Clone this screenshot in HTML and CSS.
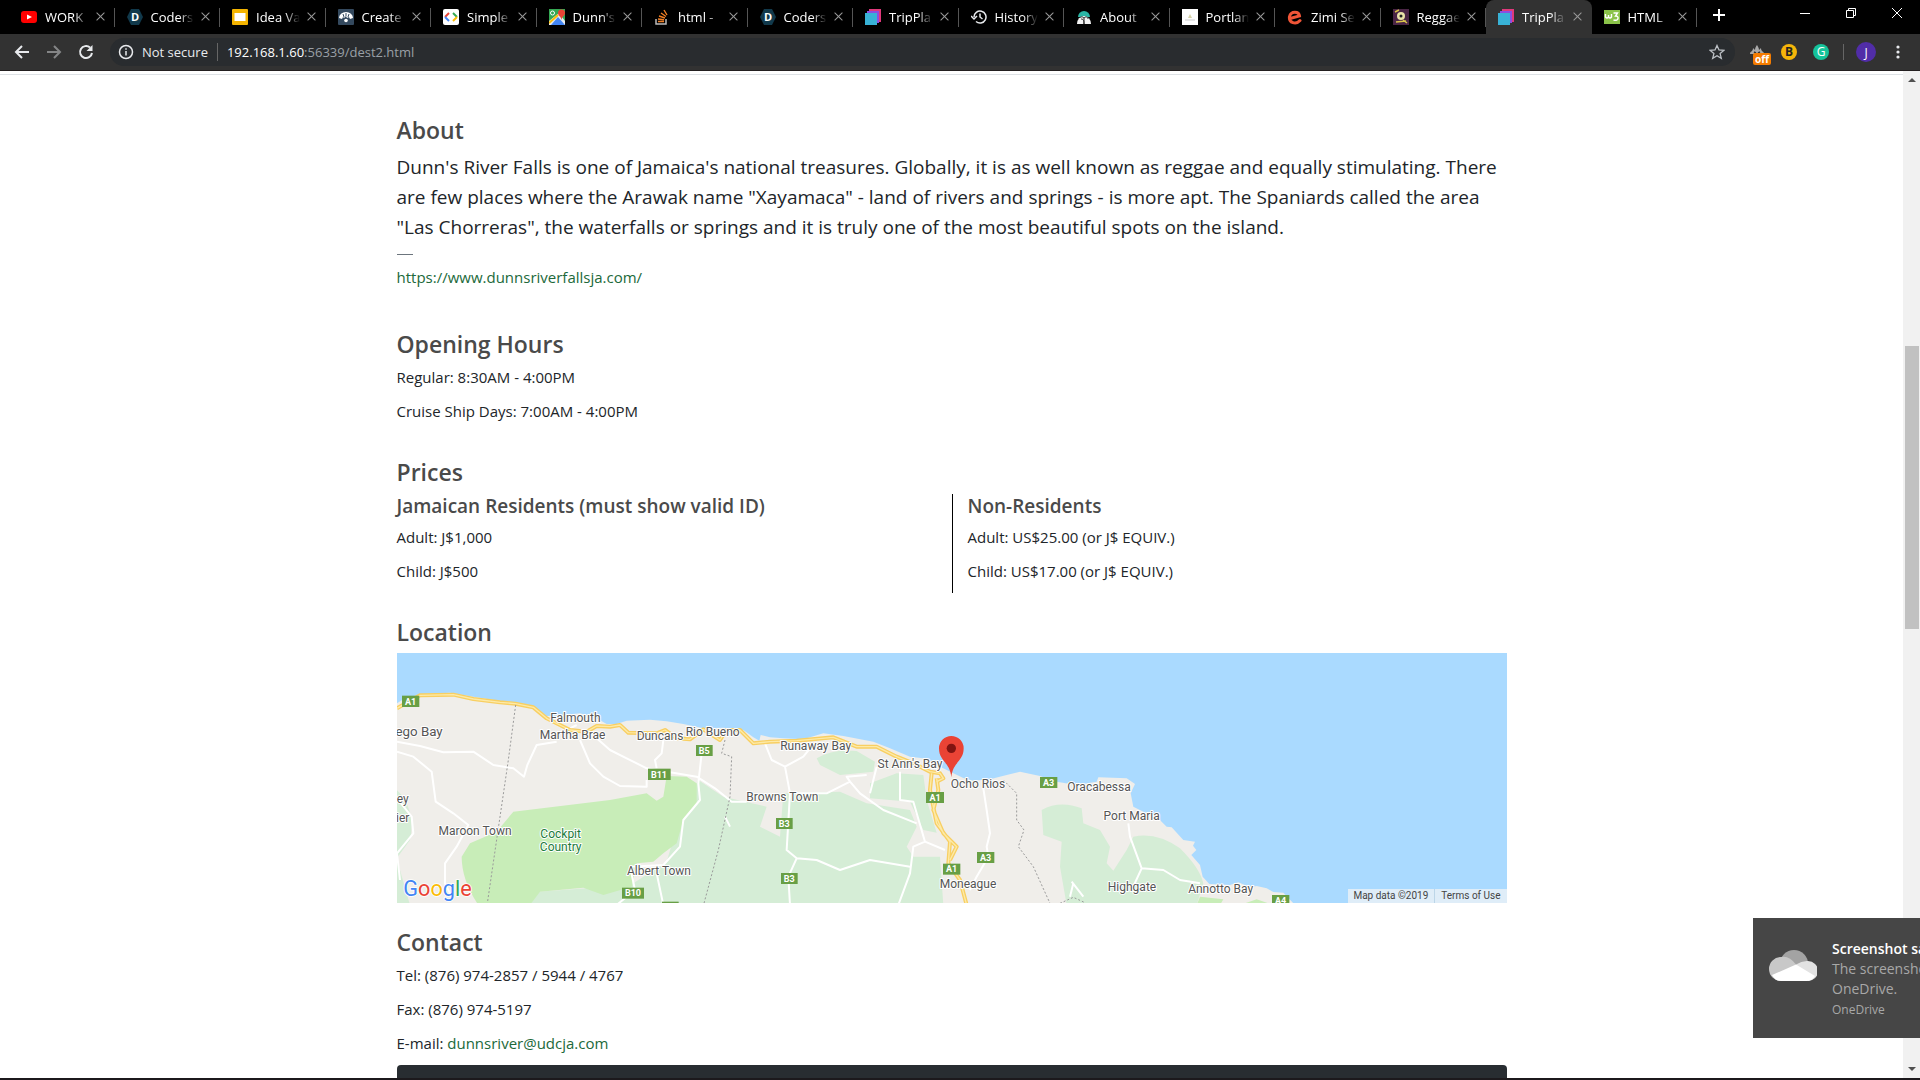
FILE: index.html
```html
<!DOCTYPE html>
<html lang="en">
<head>
  <meta charset="UTF-8" />
  <meta name="viewport" content="width=device-width, initial-scale=1" />
  <title>TripPlanner</title>
  <link rel="stylesheet" href="styles.css">
</head>
<body>

  <!-- Tab strip -->
  <div class="tab-strip">
    <div class="tabs">
      <div class="tab">
        <svg class="favicon" viewBox="0 0 16 16"><rect x="0" y="2" width="16" height="12" rx="3" fill="#f00"/><path d="M6 5.500l5 2.500-5 2.500z" fill="#fff"/></svg>
        <span class="tab-title">WORK</span><button class="tab-close" aria-label="Close tab"></button>
      </div>
      <div class="tab">
        <svg class="favicon" viewBox="0 0 16 16"><path d="M4 0h8l4 8-4 8H4L0 8z" fill="#11394b"/><text x="8" y="12" class="fav-letter">D</text></svg>
        <span class="tab-title">Coders</span><button class="tab-close" aria-label="Close tab"></button>
      </div>
      <div class="tab">
        <svg class="favicon" viewBox="0 0 16 16"><rect width="16" height="16" rx="1" fill="#f4b400"/><rect x="2.500" y="4" width="11" height="8" fill="#fff"/></svg>
        <span class="tab-title">Idea Va</span><button class="tab-close" aria-label="Close tab"></button>
      </div>
      <div class="tab">
        <svg class="favicon" viewBox="0 0 16 16"><rect width="16" height="16" rx="1" fill="#34495e"/><path d="M1 9a7 6 0 0 1 14 0l-3 1-1-2-2 1-1-2-2 2-1-1-1 2z" fill="#fff"/><path d="M5 5l1 3M8 4v3M11 5l-1 3" stroke="#34495e"/><circle cx="8" cy="11.500" r="1.800" fill="#fff"/></svg>
        <span class="tab-title">Create</span><button class="tab-close" aria-label="Close tab"></button>
      </div>
      <div class="tab">
        <svg class="favicon" viewBox="0 0 16 16"><rect width="16" height="16" rx="2" fill="#fff"/><g fill="none" stroke-width="2"><path d="M6 4L2 8" stroke="#ea4335"/><path d="M2 8l4 4" stroke="#4285f4"/><path d="M10 4l4 4" stroke="#34a853"/><path d="M14 8l-4 4" stroke="#fbbc05"/></g></svg>
        <span class="tab-title">Simple</span><button class="tab-close" aria-label="Close tab"></button>
      </div>
      <div class="tab">
        <svg class="favicon" viewBox="0 0 16 16"><rect width="16" height="16" fill="#34a853"/><path d="M0 16V12L10 4l6 8v4z" fill="#e8eaed"/><path d="M2 16l7-8 7 8z" fill="#4285f4"/><path d="M0 14L9 6" stroke="#fbbc05" stroke-width="2"/><path d="M9 4a3.500 3.500 0 0 1 7 0c0 3-3 3-3.500 7C12 7 9 7 9 4z" fill="#ea4335"/><circle cx="3.500" cy="4" r="2" fill="none" stroke="#fff"/></svg>
        <span class="tab-title">Dunn's</span><button class="tab-close" aria-label="Close tab"></button>
      </div>
      <div class="tab">
        <svg class="favicon" viewBox="0 0 16 16" fill="none"><path d="M2 10v5h10v-5" stroke="#bcbbbb" stroke-width="1.500"/><path d="M4 12.500h6M4 10l6 .8M5 7l6 2M7 4l5 3.500M10 1l3 5" stroke="#f48024" stroke-width="1.400"/></svg>
        <span class="tab-title">html -</span><button class="tab-close" aria-label="Close tab"></button>
      </div>
      <div class="tab">
        <svg class="favicon" viewBox="0 0 16 16"><path d="M4 0h8l4 8-4 8H4L0 8z" fill="#11394b"/><text x="8" y="12" class="fav-letter">D</text></svg>
        <span class="tab-title">Coders</span><button class="tab-close" aria-label="Close tab"></button>
      </div>
      <div class="tab">
        <svg class="favicon" viewBox="0 0 16 16"><rect x="4" width="12" height="13" fill="#e0397b"/><rect x="2" y="2" width="12" height="12" fill="#8b4fe0"/><rect y="4" width="12" height="12" fill="#38b2d6"/></svg>
        <span class="tab-title">TripPla</span><button class="tab-close" aria-label="Close tab"></button>
      </div>
      <div class="tab">
        <svg class="favicon" viewBox="0 0 16 16" fill="none" stroke="#e8eaed" stroke-width="1.500"><path d="M3 8a6 6 0 1 1 2 4.500"/><path d="M0 7l3 3 3-3M9 4.500V8l2.500 2"/></svg>
        <span class="tab-title">History</span><button class="tab-close" aria-label="Close tab"></button>
      </div>
      <div class="tab">
        <svg class="favicon" viewBox="0 0 16 16"><path d="M2 8a6 6 0 0 1 12 0z" fill="#2bb5a5"/><path d="M1 15a7 8 0 0 1 14 0z" fill="#f2f2f2"/><path d="M8 15c0-4-1-5-3-5M8 9c2-2 4-1 4 1M8 9C6 7 4 8 4 9M8 9v6" stroke="#222" fill="none"/></svg>
        <span class="tab-title">About</span><button class="tab-close" aria-label="Close tab"></button>
      </div>
      <div class="tab">
        <svg class="favicon" viewBox="0 0 16 16"><rect width="16" height="16" fill="#fff"/><path d="M6 9l2-4 2 4z" fill="#d7d3a8"/><path d="M3 11h10" stroke="#ccc"/></svg>
        <span class="tab-title">Portlan</span><button class="tab-close" aria-label="Close tab"></button>
      </div>
      <div class="tab">
        <svg class="favicon" viewBox="0 0 16 16"><path d="M3 9.500l9.500-2.500C12 2 4 1.500 2.500 7.500 1.500 14 9 16 13 11.500" fill="none" stroke="#f05537" stroke-width="3" stroke-linecap="round"/></svg>
        <span class="tab-title">Zimi Se</span><button class="tab-close" aria-label="Close tab"></button>
      </div>
      <div class="tab">
        <svg class="favicon" viewBox="0 0 16 16"><rect width="16" height="16" fill="#4a2545"/><circle cx="8" cy="7" r="4" fill="#e9e2a8"/><circle cx="8" cy="7" r="1.500" fill="#222"/><path d="M2 3l4-2M3 13l10-1M10 11l4 3" stroke="#d8c34a" stroke-width="1.500"/></svg>
        <span class="tab-title">Reggae</span><button class="tab-close" aria-label="Close tab"></button>
      </div>
      <div class="tab active">
        <svg class="favicon" viewBox="0 0 16 16"><rect x="4" width="12" height="13" fill="#e0397b"/><rect x="2" y="2" width="12" height="12" fill="#8b4fe0"/><rect y="4" width="12" height="12" fill="#38b2d6"/></svg>
        <span class="tab-title">TripPla</span><button class="tab-close" aria-label="Close tab"></button>
      </div>
      <div class="tab">
        <svg class="favicon" viewBox="0 0 16 16"><rect y="1" width="16" height="14" fill="#8bc34a"/><path d="M1.500 5v3q1.500 2 3 0V6v2q1.500 2 3 0V5M9.500 4h4L11.500 7q3 0 2.500 2.500T9.500 11" fill="none" stroke="#fff" stroke-width="1.400"/></svg>
        <span class="tab-title">HTML</span><button class="tab-close" aria-label="Close tab"></button>
      </div>
    </div>
    <div class="window-controls">
      <button aria-label="New tab"><svg viewBox="0 0 14 14"><path d="M7 1v12M1 7h12" stroke-width="2"/></svg></button>
      <span class="drag-area"></span>
      <button class="win" aria-label="Minimize"><svg viewBox="0 0 14 14"><path d="M2 7.500h10"/></svg></button>
      <button class="win" aria-label="Restore"><svg viewBox="0 0 14 14"><path d="M2.500 4.500h7v7h-7zM4.500 4.500v-2h7v7h-2"/></svg></button>
      <button class="win" aria-label="Close"><svg viewBox="0 0 14 14"><path d="M2 2l10 10M12 2L2 12"/></svg></button>
    </div>
  </div>

  <!-- Toolbar -->
  <div class="toolbar">
    <button aria-label="Back"><svg viewBox="0 0 16 16"><path d="M15 8H2M8 2L2 8l6 6"/></svg></button>
    <button class="disabled" aria-label="Forward"><svg viewBox="0 0 16 16"><path d="M1 8h13M8 2l6 6-6 6"/></svg></button>
    <button aria-label="Reload"><svg viewBox="0 0 16 16"><path d="M14 9a6 6 0 1 1-2-5.500"/><path d="M14.500 1v6h-6z" fill="#e8eaed" stroke="none"/></svg></button>
    <div class="omnibox">
      <svg class="info-icon" viewBox="0 0 16 16"><circle cx="8" cy="8" r="6.500"/><path d="M8 7v4.500M8 4.200v1.600"/></svg>
      <span class="not-secure">Not secure</span>
      <span class="url"><b>192.168.1.60</b>:56339/dest2.html</span>
      <button aria-label="Bookmark"><svg viewBox="0 0 16 16"><path d="M8 1.500l2 4.500 4.800.4-3.700 3.200 1.200 4.800L8 11.800l-4.300 2.600 1.200-4.800L1.200 6.400 6 6z" stroke-width="1.300"/></svg></button>
    </div>
    <div class="extensions">
      <button class="ext-off" aria-label="Extension"><svg viewBox="0 0 16 16"><path d="M1 10C1 7 4 8 4 4l2 2c0-2 1-4 2-5 1 2 2 3 2 5l2-2c0 4 3 3 3 6z" fill="#aaa" stroke="none"/><path d="M5 8l2 1M11 8L9 9" stroke="#323232" stroke-width="1.500"/></svg><span class="badge">off</span></button>
      <button class="ext-circle ext-b">B</button>
      <button class="ext-circle ext-g">G</button>
    </div>
    <button class="avatar">J</button>
    <button aria-label="Menu"><svg viewBox="0 0 16 16"><g fill="#e8eaed" stroke="none"><circle cx="8" cy="3" r="1.600"/><circle cx="8" cy="8" r="1.600"/><circle cx="8" cy="13" r="1.600"/></g></svg></button>
  </div>

  <!-- Page -->
  <div class="page">
    <main class="content">
      <div class="container">
        <section class="about">
          <h4>About</h4>
          <p class="lead">Dunn's River Falls is one of Jamaica's national treasures. Globally, it is as well known as reggae and equally stimulating. There are few places where the Arawak name "Xayamaca" - land of rivers and springs - is more apt. The Spaniards called the area "Las Chorreras", the waterfalls or springs and it is truly one of the most beautiful spots on the island.</p>
          <hr class="dash">
          <a href="https://www.dunnsriverfallsja.com/">https://www.dunnsriverfallsja.com/</a>
        </section>

        <section class="hours">
          <h4>Opening Hours</h4>
          <p>Regular: 8:30AM - 4:00PM</p>
          <p>Cruise Ship Days: 7:00AM - 4:00PM</p>
        </section>

        <section class="prices">
          <h4>Prices</h4>
          <div class="row">
            <div class="col">
              <h5>Jamaican Residents (must show valid ID)</h5>
              <p>Adult: J$1,000</p>
              <p>Child: J$500</p>
            </div>
            <div class="col">
              <h5>Non-Residents</h5>
              <p>Adult: US$25.00 (or J$ EQUIV.)</p>
              <p>Child: US$17.00 (or J$ EQUIV.)</p>
            </div>
          </div>
        </section>

        <section class="location">
          <h4>Location</h4>
          <div class="map">
            <svg viewBox="21 9 3330 750" preserveAspectRatio="xMidYMid slice">
              <path class="land" d="M0 172L40 148 90 133 180 128 250 140 330 153 376 157 430 168 470 198 520 196 570 190 620 205 650 222 680 222 710 212 780 209 830 214 880 222 940 235 1000 233 1060 240 1090 262 1108 272 1112 255 1140 262 1180 265 1240 268 1300 250 1360 258 1450 275 1500 295 1560 320 1600 325 1640 345 1690 370 1720 384 1750 392 1800 388 1850 375 1890 365 1950 378 2000 395 2060 405 2120 395 2125 382 2210 385 2235 402 2222 430 2230 470 2260 485 2300 500 2330 530 2345 532 2380 570 2415 575 2409 587 2419 600 2404 615 2430 645 2438 680 2458 702 2520 705 2545 697 2580 712 2600 708 2630 715 2650 726 2680 728 2715 765 0 765z"/>

              <!-- Parks and forest -->
              <path class="forest" d="M0 400L40 440Q75 500 60 570L20 625 60 765 0 765zM420 765L445 725 590 715 730 700 830 635 870 500 925 390 1000 440 1130 470 1110 530 1170 560 1180 430 1350 425 1430 460 1560 480 1580 530 1550 590 1570 620 1650 620 1660 765zM1280 325Q1330 295 1400 303L1455 335 1450 365 1350 375 1290 345zM1440 400L1520 370 1600 375 1610 450 1640 548 1600 540 1560 455 1440 445zM1955 480Q2010 450 2075 475L2080 520 2130 540 2160 590 2150 640 2170 662 2210 600 2230 560Q2300 545 2370 595 2430 655 2440 700L2420 765H2030L2010 650 2015 575 1960 555z"/>
              <path class="park" d="M370 485L660 450 770 430 800 452 820 440 830 378 890 380 920 400 920 460 880 510 860 580 820 610 790 635 740 640 725 710 640 735 580 713 450 725 420 765 265 765Q215 690 215 620L240 580 320 545zM2420 765L2430 740 2500 748 2490 765zM2550 765L2600 748 2650 765z"/>

              <!-- Minor roads -->
              <g class="road">
                <path d="M21 275L90 288 160 307 250 305 310 345 370 355 402 380 412 345 440 285 500 275M21 305L70 320 125 365 137 455 190 490 235 525 200 590 165 640 165 700 185 740M21 445L65 500 70 550 21 610 30 690M570 270L600 340 640 380 690 408 770 410 770 390M620 265L660 300 710 325 770 355 920 380 975 415 1025 455 1070 455M540 235L560 225M820 270L815 310 795 330 800 355M935 310L925 400 930 450 880 510 870 590 820 645 720 650 735 720 680 765M800 670L820 765M1005 500L1020 530M1125 280L1145 330 1185 350 1240 320 1260 295M1185 350L1200 430 1190 600 1220 625 1280 630 1350 660 1440 630 1560 650M1200 430L1310 430 1380 395 1410 430 1480 480 1580 520M1380 395L1370 380 1430 375M1440 430L1460 350M1530 365L1530 450 1570 455 1605 575 1665 600M1605 575L1570 590 1560 670 1525 765M1220 625L1195 680 1200 765M1780 415L1790 480 1800 550 1790 590 1795 620 1760 680 1740 720M2215 520L2220 560 2255 655 2225 720M2255 655L2320 660 2370 690 2430 700M2050 700L2040 740M2045 695L2080 740"/>
              </g>

              <!-- Highways -->
              <g class="highway">
                <path d="M21 175L90 136 190 134 250 147 330 157 376 161 430 172 470 205 540 240 590 245 620 228 660 230 690 225 715 248 800 250 825 240 860 265 900 268 940 238 990 270 1010 240 1050 240 1090 280 1140 275 1220 272 1330 262 1400 290 1460 290 1520 320 1570 340 1620 365 1650 370 1660 385 1640 395"/>
                <path d="M1625 370L1620 420 1640 520 1680 575 1675 640 1710 690 1730 765M1640 385L1645 420 1630 480 1660 550 1700 590 1680 630"/>
              </g>
              <g class="highway-core">
                <path d="M21 175L90 136 190 134 250 147 330 157 376 161 430 172 470 205 540 240 590 245 620 228 660 230 690 225 715 248 800 250 825 240 860 265 900 268 940 238 990 270 1010 240 1050 240 1090 280 1140 275 1220 272 1330 262 1400 290 1460 290 1520 320 1570 340 1620 365 1650 370 1660 385 1640 395"/>
                <path d="M1625 370L1620 420 1640 520 1680 575 1675 640 1710 690 1730 765M1640 385L1645 420 1630 480 1660 550 1700 590 1680 630"/>
              </g>
              <path class="border" d="M377 165L355 330 292 760M1005 270L995 310 1025 320 1020 440 985 600 942 760M1840 390L1880 430 1880 510 1902 540 1885 590 1930 650 1980 760M2010 760L2050 742 2085 758"/>

              <!-- Road shields -->
              <g class="shield">
                <rect x="36" y="137" width="52" height="34"/><rect x="774" y="356" width="68" height="34"/><rect x="918" y="285" width="50" height="33"/><rect x="696" y="713" width="66" height="33"/><rect x="816" y="755" width="50" height="33"/>
                <rect x="1608" y="426" width="54" height="33"/><rect x="1659" y="641" width="52" height="33"/><rect x="1950" y="381" width="52" height="33"/><rect x="1761" y="606" width="52" height="33"/><rect x="1158" y="504" width="50" height="33"/><rect x="1173" y="669" width="50" height="33"/><rect x="2646" y="735" width="52" height="33"/>
              </g>
              <g class="shield-text">
                <text x="62" y="164">A1</text><text x="807" y="383">B11</text><text x="943" y="311">B5</text><text x="729" y="739">B10</text>
                <text x="1635" y="452">A1</text><text x="1685" y="667">A1</text><text x="1976" y="407">A3</text><text x="1787" y="632">A3</text><text x="1183" y="530">B3</text><text x="1198" y="695">B3</text><text x="2672" y="763">A4</text>
              </g>

              <!-- Place names -->
              <g class="place">
                <text class="city" x="158" y="257">ego Bay</text><text x="556" y="216">Falmouth</text><text x="548" y="267">Martha Brae</text><text x="810" y="270">Duncans</text><text x="968" y="259">Rio Bueno</text>
                <text x="38" y="460">ey</text><text x="38" y="516">ier</text><text x="255" y="555">Maroon Town</text><text x="807" y="675">Albert Town</text><text x="1177" y="453">Browns Town</text><text x="1277" y="300">Runaway Bay</text>
                <text x="1560" y="354">St Ann's Bay</text><text x="1764" y="414">Ocho Rios</text><text x="1734" y="714">Moneague</text><text x="2127" y="423">Oracabessa</text><text x="2225" y="510">Port Maria</text><text x="2226" y="723">Highgate</text><text x="2492" y="728">Annotto Bay</text>
                <text class="nature" x="512" y="565">Cockpit</text><text class="nature" x="512" y="604">Country</text>
              </g>

              <path d="M1684 382C1680 335 1647 335 1647 295a37 37 0 0 1 74 0C1721 335 1688 335 1684 382z" fill="#ea4335"/>
              <circle cx="1684" cy="295" r="14" fill="#811411"/>
              <text class="google" x="40" y="737"><tspan fill="#4285f4">G</tspan><tspan fill="#ea4335">o</tspan><tspan fill="#fbbc05">o</tspan><tspan fill="#4285f4">g</tspan><tspan fill="#34a853">l</tspan><tspan fill="#ea4335">e</tspan></text>
            </svg>
            <div class="map-credits"><span>Map data ©2019</span><a href="#">Terms of Use</a></div>
          </div>
        </section>

        <section class="contact">
          <h4>Contact</h4>
          <p>Tel: (876) 974-2857 / 5944 / 4767</p>
          <p>Fax: (876) 974-5197</p>
          <p>E-mail: <a href="mailto:dunnsriver@udcja.com">dunnsriver@udcja.com</a></p>
          <button class="btn">Write a Review</button>
        </section>
      </div>
    </main>
    <div class="scrollbar"><span class="arrow up"></span><div class="track"><div class="thumb"></div></div><span class="arrow down"></span></div>
  </div>

  <div class="taskbar"></div>

  <!-- Notification sliding in from the right -->
  <div class="toast">
    <svg viewBox="0 0 48 31"><circle cx="25" cy="14" r="14" fill="#a3a3a3"/><path d="M12 7q8-2 15 7.500L12 31A12 12 0 0 1 12 7z" fill="#c8c8c8"/><path d="M27 14.500q6-4 12-3.500a9.800 9.800 0 0 1 0 20z" fill="#e2e2e2"/><path d="M3 25l24-10.500L46 26q-3 5-8 5H12q-6 0-9-6z" fill="#fff"/></svg>
    <div class="toast-text">
      <strong>Screenshot saved</strong>
      <span>The screenshot was added to your<br>OneDrive.</span>
      <small>OneDrive</small>
    </div>
  </div>

</body>
</html>
```
FILE: styles.css
```css
* {
  box-sizing: border-box;
}

body {
  margin: 0;
  height: 100vh;
  display: flex;
  flex-direction: column;
  overflow: hidden;
  font-family: 'Segoe UI', 'Open Sans', sans-serif;
  font-size: 15px;
  line-height: 24px;
  color: #212529;
  background-color: #fff;
}

button {
  font-family: inherit;
  border: none;
  padding: 0;
  background: none;
  cursor: pointer;
}

h4, h5, p {
  margin: 0;
}

a {
  color: #21693a;
  text-decoration: none;
}

/* Tab strip */
.tab-strip {
  display: flex;
  flex: none;
  height: 34px;
  background-color: #000;
}

.tabs {
  display: flex;
  flex: 1;
  padding-left: 9px;
  min-width: 0;
}

.tab {
  position: relative;
  display: flex;
  flex: 1 1 0;
  align-items: center;
  min-width: 0;
  padding: 0 8px 0 12px;
  color: #fff;
  font-size: 13px;
}

.tab::after {
  content: "";
  position: absolute;
  right: 0;
  top: 8px;
  width: 1px;
  height: 19px;
  background-color: #555;
}

.tab.active {
  background-color: #323232;
  border-radius: 8px 8px 0 0;
}

.tab.active::after {
  display: none;
}

.favicon {
  flex: none;
  width: 16px;
  height: 16px;
  margin-right: 8px;
}

.fav-letter {
  font-size: 11px;
  font-weight: bold;
  fill: #fff;
  text-anchor: middle;
}

.tab-title {
  flex: 1;
  min-width: 0;
  margin-right: 6px;
  overflow: hidden;
  white-space: nowrap;
  -webkit-mask-image: linear-gradient(to right, #000 65%, transparent);
  mask-image: linear-gradient(to right, #000 65%, transparent);
}

.tab-close {
  position: relative;
  flex: none;
  width: 12px;
  height: 12px;
}

.tab-close::before,
.tab-close::after {
  content: "";
  position: absolute;
  left: 0;
  top: 5px;
  width: 11px;
  height: 1px;
  background-color: #9a9a9a;
  transform: rotate(45deg);
}

.tab-close::after {
  transform: rotate(-45deg);
}

.window-controls {
  display: flex;
  flex: none;
  width: 223px;
  padding-left: 15px;
}

.window-controls svg {
  width: 14px;
  height: 14px;
  fill: none;
  stroke: #fff;
}

.drag-area {
  flex: 1;
}

.window-controls .win {
  width: 46px;
  padding-bottom: 4px;
}

/* Toolbar */
.toolbar {
  display: flex;
  flex: none;
  align-items: center;
  height: 37px;
  padding: 0 14px;
  border-bottom: 1px solid #231f20;
  background-color: #323232;
}

.toolbar svg {
  display: block;
  width: 16px;
  height: 16px;
  fill: none;
  stroke: #e8eaed;
  stroke-width: 2;
}

.toolbar > button {
  margin-right: 16px;
}

.toolbar > .avatar {
  margin-right: 14px;
}

.toolbar > button:last-child {
  margin-right: 0;
}

.toolbar .disabled {
  opacity: 0.45;
}

.omnibox {
  display: flex;
  flex: 1;
  align-items: center;
  height: 28px;
  padding: 0 10px 0 8px;
  border-radius: 14px;
  background-color: #292c2f;
  font-size: 13px;
}

.omnibox .info-icon {
  width: 16px;
  height: 16px;
  margin-right: 8px;
  stroke-width: 1.5;
}

.omnibox button svg {
  stroke: #bdc1c6;
}

.not-secure {
  padding-right: 9px;
  border-right: 1px solid #666;
  color: #e8eaed;
  line-height: 18px;
}

.url {
  flex: 1;
  padding-left: 9px;
  color: #9aa0a6;
}

.url b {
  color: #fff;
  font-weight: normal;
}

.extensions {
  display: flex;
  align-items: center;
  gap: 16px;
  margin: 0 12px 0 14px;
  padding-right: 14px;
  border-right: 1px solid #666;
}

.ext-off {
  position: relative;
}

.badge {
  position: absolute;
  left: 4px;
  top: 9px;
  padding: 0 2px;
  border-radius: 2px;
  background-color: #f57c00;
  color: #fff;
  font-size: 10px;
  font-weight: bold;
  line-height: 12px;
}

.ext-circle {
  width: 16px;
  height: 16px;
  border-radius: 50%;
  font-size: 12px;
  line-height: 16px;
}

.ext-b {
  background-color: #f5b50a;
  color: #222;
  font-weight: bold;
}

.ext-g {
  background-color: #15c39a;
  color: #fff;
}

.avatar {
  width: 20px;
  height: 20px;
  border-radius: 50%;
  background-color: #512da8;
  color: #fff;
  font-size: 12px;
}

/* Page */
.page {
  display: flex;
  flex: 1;
  min-height: 0;
}

.content {
  flex: 1;
  min-width: 0;
  overflow: hidden;
  margin-top: 3px;
  border-top: 1px solid #dee2e6;
}

.container {
  max-width: 1140px;
  margin: 0 auto;
  padding: 41px 15px 0;
}

h4 {
  margin-bottom: 7px;
  color: #4a4a4a;
  font-size: 23px;
  font-weight: 600;
  line-height: 29px;
}

h5 {
  margin-bottom: 7px;
  color: #4a4a4a;
  font-size: 19px;
  font-weight: 600;
  line-height: 24px;
}

p + p {
  margin-top: 10px;
}

.lead {
  font-size: 19px;
  line-height: 30px;
}

.dash {
  width: 16px;
  height: 1px;
  margin: 12px 0 10px;
  border: none;
  background-color: #6c757d;
}

.about {
  margin-bottom: 41px;
}

.hours {
  margin-bottom: 35px;
}

.hours h4,
.location h4,
.contact h4 {
  margin-bottom: 6px;
}

.row {
  display: flex;
}

.col {
  width: 50%;
  padding-bottom: 10px;
}

.col + .col {
  padding-left: 15px;
  border-left: 1px solid #000;
}

.prices {
  margin-bottom: 25px;
}

/* Map */
.map {
  position: relative;
  height: 250px;
  margin-bottom: 25px;
  overflow: hidden;
  background-color: #aadaff;
}

.map svg {
  display: block;
  width: 100%;
  height: 100%;
}

.map text {
  font-family: Roboto, sans-serif;
}

.land {
  fill: #f0eeea;
}

.forest {
  fill: #d5edd6;
}

.park {
  fill: #c8edb8;
}

.road {
  fill: none;
  stroke: #fff;
  stroke-width: 6;
  stroke-linejoin: round;
}

.highway {
  fill: none;
  stroke: #f8cf62;
  stroke-width: 12;
  stroke-linejoin: round;
}

.highway-core {
  fill: none;
  stroke: #fdeaa8;
  stroke-width: 4;
  stroke-linejoin: round;
}

.border {
  fill: none;
  stroke: #9a9a9a;
  stroke-width: 3;
  stroke-dasharray: 6 6;
}

.shield {
  fill: #689f45;
}

.shield-text {
  fill: #fff;
  font-size: 27px;
  font-weight: bold;
  text-anchor: middle;
}

.place {
  fill: #555;
  font-size: 36px;
  text-anchor: middle;
  stroke: #fff;
  stroke-width: 6;
  stroke-linejoin: round;
  paint-order: stroke;
}

.place .city {
  font-size: 40px;
  text-anchor: end;
}

.place .nature {
  fill: #1b7b3c;
}

.google {
  font-size: 65px;
  stroke: #fff;
  stroke-width: 5;
  paint-order: stroke;
}

.map-credits {
  position: absolute;
  right: 0;
  bottom: 0;
  display: flex;
  background-color: rgba(245, 245, 245, 0.7);
  font-family: Roboto, sans-serif;
  font-size: 10px;
  line-height: 14px;
}

.map-credits span,
.map-credits a {
  padding: 0 6px;
  color: #444;
}

.map-credits span {
  padding-left: 5px;
}

.map-credits a {
  border-left: 1px solid #bcd6e8;
}

.btn {
  display: block;
  width: 100%;
  margin-top: 10px;
  padding: 6px 12px;
  border-radius: 4px;
  background-color: #282d31;
  color: #fff;
  font-size: 15px;
  line-height: 24px;
}

/* Scrollbar */
.scrollbar {
  display: flex;
  flex-direction: column;
  flex: none;
  width: 17px;
  background-color: #f1f1f1;
}

.arrow {
  height: 8px;
  border: 4px solid transparent;
}

.arrow.up {
  margin: 3px auto 6px;
  border-bottom-color: #505050;
}

.arrow.down {
  margin: 6px auto 3px;
  border-top-color: #505050;
}

.track {
  flex: 1;
  padding: 258px 1px 0 2px;
}

.thumb {
  height: 283px;
  background-color: #c1c1c1;
}

.taskbar {
  flex: none;
  height: 2px;
  background-color: #1c191c;
}

/* Notification */
.toast {
  position: absolute;
  right: 0;
  bottom: 42px;
  display: flex;
  width: 167px;
  height: 120px;
  padding: 21px 0 0 16px;
  overflow: hidden;
  background-color: #464646;
  color: #a8a8a8;
}

.toast svg {
  flex: none;
  width: 48px;
  height: 31px;
  margin: 11px 15px 0 0;
}

.toast-text {
  white-space: nowrap;
  font-size: 14px;
  line-height: 20px;
}

.toast strong,
.toast small {
  display: block;
}

.toast strong {
  color: #fff;
  font-weight: 600;
}

.toast small {
  font-size: 12px;
  line-height: 22px;
}
```
